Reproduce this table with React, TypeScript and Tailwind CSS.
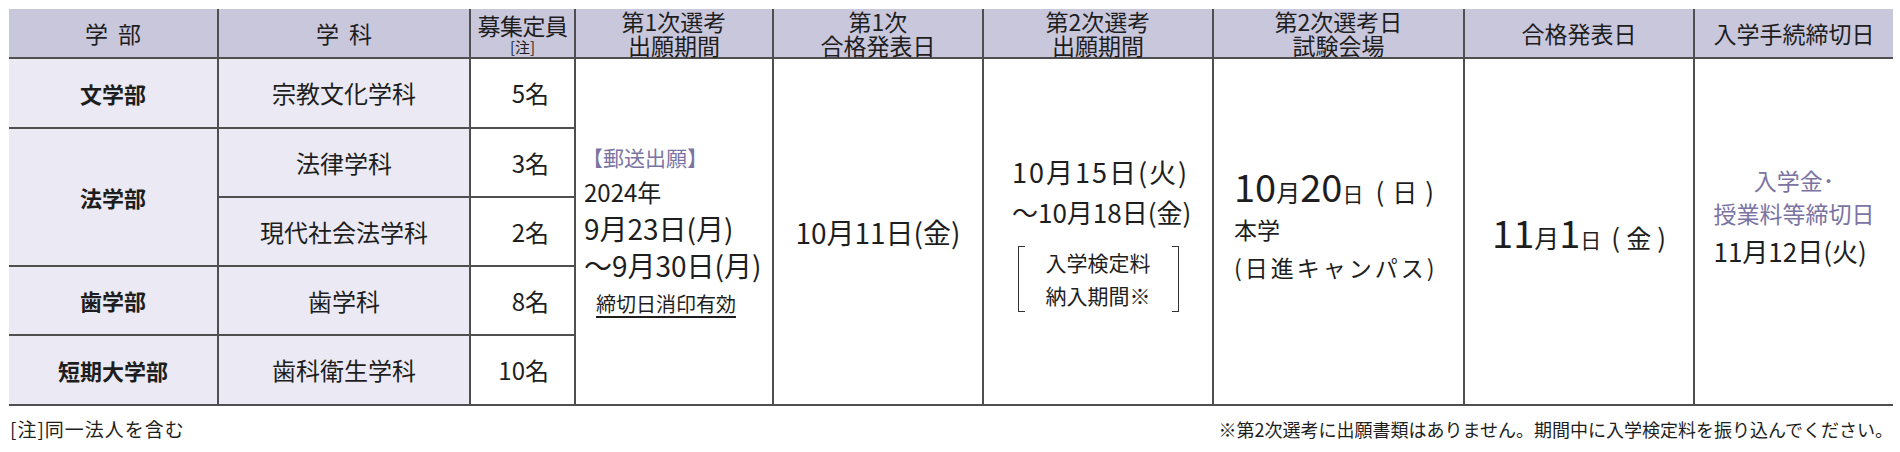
import React from 'react';

const purple = 'text-[#7b74a3]';

const BigDate: React.FC<{ parts: [string, string][] }> = ({ parts }) => (
  <div className="flex items-baseline whitespace-nowrap">
    {parts.map(([t, cls], i) => (
      <span key={i} className={`${cls} leading-none`}>
        {t}
      </span>
    ))}
  </div>
);

export default function App() {
  const th = 'border-r-2 border-b-2 border-[#4f4f4f] p-0 font-normal text-[23px] leading-[24px] text-center align-middle';
  const tdLeft = 'border-r-2 border-b-2 border-[#4f4f4f] bg-[#ebeaf4] text-center align-middle';
  const tdNum = 'border-r-2 border-b-2 border-[#4f4f4f] bg-white text-right pr-[25px] align-middle text-[24px]';
  const tdTall = 'border-r-2 border-b-2 border-[#4f4f4f] bg-white align-middle p-0';

  return (
    <div className="w-[1900px] h-[452px] bg-white pl-[9px] pr-[7px] pt-[9px] font-['Noto_Sans_CJK_JP','Noto_Sans',sans-serif] text-[#1e1e1e]">
      <table className="w-[1884px] table-fixed border-collapse">
        <colgroup>
          <col className="w-[209px]" />
          <col className="w-[252px]" />
          <col className="w-[105px]" />
          <col className="w-[198px]" />
          <col className="w-[210px]" />
          <col className="w-[230px]" />
          <col className="w-[251px]" />
          <col className="w-[230px]" />
          <col className="w-[199px]" />
        </colgroup>
        <thead>
          <tr className="h-[48px] bg-[#c9c7dc]">
            <th className={th}>
              学<span className="inline-block w-[10px]" />部
            </th>
            <th className={th}>
              学<span className="inline-block w-[10px]" />科
            </th>
            <th className={th}>
              <div className="flex flex-col items-center">
                <span className="text-[23px] leading-[28px] tracking-[-0.5px]">募集定員</span>
                <span className="text-[15px] leading-[16px]">[注]</span>
              </div>
            </th>
            <th className={th}>
              第1次選考
              <br />
              出願期間
            </th>
            <th className={th}>
              第1次
              <br />
              合格発表日
            </th>
            <th className={th}>
              第2次選考
              <br />
              出願期間
            </th>
            <th className={th}>
              第2次選考日
              <br />
              試験会場
            </th>
            <th className={th}>合格発表日</th>
            <th className="border-b-2 border-[#4f4f4f] p-0 font-normal text-[23px] leading-[24px] text-center align-middle">
              入学手続締切日
            </th>
          </tr>
        </thead>
        <tbody>
          <tr className="h-[70px]">
            <td className={`${tdLeft} text-[22px] font-bold`}>文学部</td>
            <td className={`${tdLeft} text-[24px]`}>宗教文化学科</td>
            <td className={tdNum}>5名</td>

            {/* 第1次選考 出願期間 */}
            <td rowSpan={5} className={tdTall}>
              <div className="flex flex-col pl-[8px] whitespace-nowrap">
                <div className={`${purple} text-[21px] leading-[34px] -ml-[2px]`}>【郵送出願】</div>
                <div className="text-[24px] leading-[36px]">2024年</div>
                <div className="text-[28px] leading-[37px]">9月23日(月)</div>
                <div className="text-[28px] leading-[37px]">〜9月30日(月)</div>
                <div className="text-[20px] leading-[40px] pl-[12px]">
                  <span className="underline underline-offset-4">締切日消印有効</span>
                </div>
              </div>
            </td>

            {/* 第1次 合格発表日 */}
            <td rowSpan={5} className={`${tdTall} text-center text-[28px] whitespace-nowrap`}>10月11日(金)</td>

            {/* 第2次選考 出願期間 */}
            <td rowSpan={5} className={tdTall}>
              <div className="flex flex-col items-center">
                <div className="w-[172px] whitespace-nowrap leading-[40px]">
                  <div className="text-[27px] tracking-[2px]">10月15日(火)</div>
                  <div className="text-[26px]">〜10月18日(金)</div>
                </div>
                <div className="mt-[14px] flex h-[66px] w-[161px]">
                  <div className="w-[7px] border-l-[1.5px] border-t-[1.5px] border-b-[1.5px] border-[#333]" />
                  <div className="flex flex-1 flex-col items-center justify-center text-[21px] leading-[33px]">
                    <span>入学検定料</span>
                    <span>納入期間※</span>
                  </div>
                  <div className="w-[7px] border-r-[1.5px] border-t-[1.5px] border-b-[1.5px] border-[#333]" />
                </div>
              </div>
            </td>

            {/* 第2次選考日 試験会場 */}
            <td rowSpan={5} className={tdTall}>
              <div className="flex flex-col pl-[20px] mb-[8px]">
                <div className="h-[40px] pb-[8px] flex items-center">
                  <BigDate
                    parts={[
                      ['10', 'text-[38px]'],
                      ['月', 'text-[24px]'],
                      ['20', 'text-[38px]'],
                      ['日', 'text-[21px]'],
                      ['(', 'text-[26px] ml-[12px]'],
                      ['日', 'text-[25px] mx-[8px]'],
                      [')', 'text-[26px]'],
                    ]}
                  />
                </div>
                <div className="text-[23px] leading-[38px]">本学</div>
                <div className="text-[23px] leading-[38px] tracking-[3px]">(日進キャンパス)</div>
              </div>
            </td>

            {/* 合格発表日 */}
            <td rowSpan={5} className={tdTall}>
              <div className="flex justify-center">
                <BigDate
                  parts={[
                    ['11', 'text-[38px]'],
                    ['月', 'text-[25px]'],
                    ['1', 'text-[38px]'],
                    ['日', 'text-[21px]'],
                    ['(', 'text-[26px] ml-[10px]'],
                    ['金', 'text-[25px] mx-[6px]'],
                    [')', 'text-[26px]'],
                  ]}
                />
              </div>
            </td>

            {/* 入学手続締切日 */}
            <td rowSpan={5} className="border-b-2 border-[#4f4f4f] bg-white align-middle p-0">
              <div className="flex justify-center pb-[28px]">
                <div className="flex flex-col items-center whitespace-nowrap">
                  <div className={`${purple} text-[23px] leading-[33px]`}>入学金･</div>
                  <div className={`${purple} text-[23px] leading-[33px]`}>授業料等締切日</div>
                  <div className="self-start text-[26px] leading-[42px]">11月12日(火)</div>
                </div>
              </div>
            </td>
          </tr>
          <tr className="h-[69px]">
            <td rowSpan={2} className={`${tdLeft} text-[22px] font-bold`}>
              法学部
            </td>
            <td className={`${tdLeft} text-[24px]`}>法律学科</td>
            <td className={tdNum}>3名</td>
          </tr>
          <tr className="h-[69px]">
            <td className={`${tdLeft} text-[24px]`}>現代社会法学科</td>
            <td className={tdNum}>2名</td>
          </tr>
          <tr className="h-[69px]">
            <td className={`${tdLeft} text-[22px] font-bold`}>歯学部</td>
            <td className={`${tdLeft} text-[24px]`}>歯学科</td>
            <td className={tdNum}>8名</td>
          </tr>
          <tr className="h-[70px]">
            <td className={`${tdLeft} text-[22px] font-bold`}>短期大学部</td>
            <td className={`${tdLeft} text-[24px]`}>歯科衛生学科</td>
            <td className={tdNum}>10名</td>
          </tr>
        </tbody>
      </table>

      <div className="mt-[9px] flex items-center justify-between pl-[1px] leading-[28px]">
        <span className="text-[19px] tracking-[1px]">[注]同一法人を含む</span>
        <span className="text-[18px]">※第2次選考に出願書類はありません。期間中に入学検定料を振り込んでください。</span>
      </div>
    </div>
  );
}
